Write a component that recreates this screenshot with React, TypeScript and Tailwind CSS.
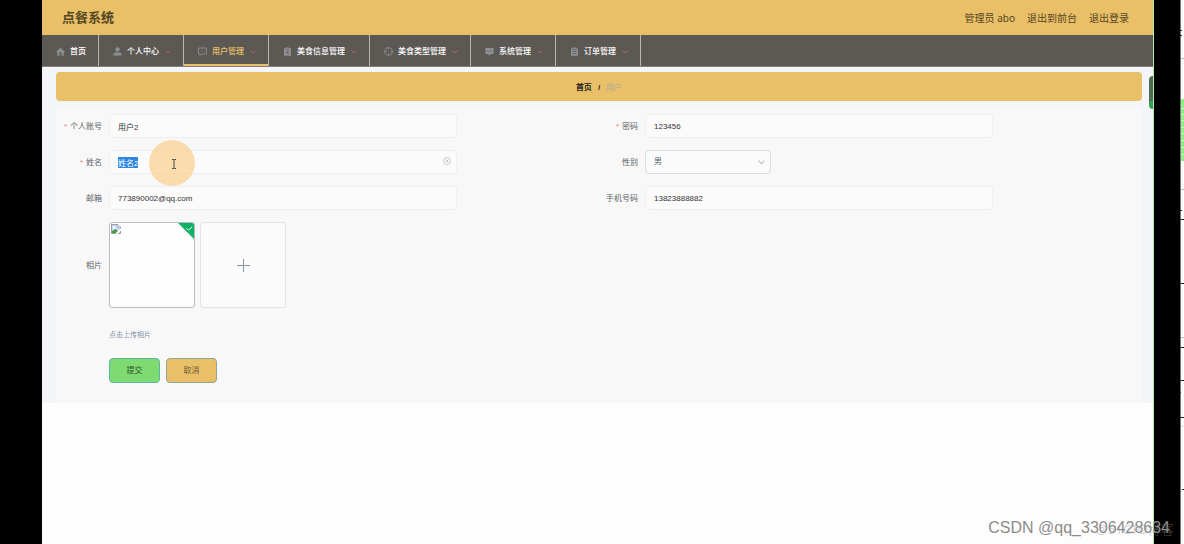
import { useEffect, useRef } from "react";
import type { ReactNode } from "react";

const iconBox = "h-[9px] w-[9px] shrink-0 text-[#8f8f93]";

function HomeIcon() {
  return (
    <svg viewBox="0 0 18 18" className={iconBox} fill="currentColor" aria-hidden="true">
      <path d="M9 1.500 1 9v2h1.500v6.500H7V12a2 2 0 0 1 4 0v5.500h4.500V11H17V9z" />
    </svg>
  );
}

function UserIcon() {
  return (
    <svg viewBox="0 0 18 18" className={iconBox} fill="currentColor" aria-hidden="true">
      <circle cx="9" cy="5" r="4.500" />
      <path d="M1 17v-2c0-2.500 2-4 4.500-4h7c2.500 0 4.500 1.500 4.500 4v2z" />
    </svg>
  );
}

function ChatIcon() {
  return (
    <svg viewBox="0 0 18 18" className={iconBox} fill="none" stroke="currentColor" strokeWidth="1.800" aria-hidden="true">
      <path d="M1 2h16v12H7l-3 3v-3H1z" />
      <path d="M5 8h1.500M8.300 8h1.500M11.600 8h1.500" strokeWidth="2" />
    </svg>
  );
}

function ClipboardXIcon() {
  return (
    <svg viewBox="0 0 18 18" className={iconBox} aria-hidden="true">
      <path d="M2 2.500h3.500V1h7v1.500H16V17.500H2z" fill="currentColor" />
      <path d="M6 4.500h6M6.500 8l5 6M11.500 8l-5 6" stroke="#5c5955" strokeWidth="1.500" />
    </svg>
  );
}

function HelpIcon() {
  return (
    <svg viewBox="0 0 18 18" className={iconBox} fill="none" stroke="currentColor" strokeWidth="1.600" aria-hidden="true">
      <circle cx="9" cy="9" r="8" />
      <path d="M9 1v5M9 12v5M1 9h5M12 9h5" />
    </svg>
  );
}

function MessageIcon() {
  return (
    <svg viewBox="0 0 18 18" className={iconBox} aria-hidden="true">
      <path d="M1 2h16v12h-5l-3 3-3-3H1z" fill="currentColor" />
      <path d="M4.500 8h2M8 8h2M11.500 8h2" stroke="#5c5955" strokeWidth="1.500" />
    </svg>
  );
}

function OrderIcon() {
  return (
    <svg viewBox="0 0 18 18" className={iconBox} aria-hidden="true">
      <path d="M2 3h3.500V1h7v2H16v14.500H2z" fill="currentColor" />
      <path d="M5.500 5.500h7M5 9h8M5 13h8" stroke="#5c5955" strokeWidth="1.500" />
    </svg>
  );
}

function Chevron({ className }: { className: string }) {
  return (
    <svg viewBox="0 0 12 8" className={className} fill="none" stroke="currentColor" strokeWidth="2" aria-hidden="true">
      <path d="m1 1 5 5 5-5" />
    </svg>
  );
}

const navItems: { label: string; icon: ReactNode; menu: boolean; active?: boolean }[] = [
  { label: "首页", icon: <HomeIcon />, menu: false },
  { label: "个人中心", icon: <UserIcon />, menu: true },
  { label: "用户管理", icon: <ChatIcon />, menu: true, active: true },
  { label: "美食信息管理", icon: <ClipboardXIcon />, menu: true },
  { label: "美食类型管理", icon: <HelpIcon />, menu: true },
  { label: "系统管理", icon: <MessageIcon />, menu: true },
  { label: "订单管理", icon: <OrderIcon />, menu: true },
];

const inputClass =
  "block h-6 w-full rounded-sm border border-[#efefef] bg-[#fbfbfb] px-2 text-[8px] leading-3 text-[#333] outline-none selection:bg-[#2d86e0] selection:text-white";

function Field({ id, label, required, children }: { id: string; label: string; required?: boolean; children: ReactNode }) {
  return (
    <div className="flex items-center">
      <label htmlFor={id} className="flex w-[46px] shrink-0 justify-end gap-[3px] pt-0.5 pr-[7px] whitespace-nowrap text-[#606266]">
        {required && <span className="text-[#e58a80]">*</span>}
        {label}
      </label>
      <div className="relative w-[65%]">{children}</div>
    </div>
  );
}

function EdgeStrip() {
  return (
    <svg viewBox="0 0 4 544" preserveAspectRatio="xMinYMin slice" className="h-full w-full" aria-hidden="true">
      <rect width="1" height="544" fill="#777" />
      <rect x="1" y="99" width="3" height="62" fill="#8fee85" />
      <path d="M1 108.500h3M1 114.500h3M1 120.500h3M1 127.500h3M1 133.500h3M1 140.500h3M1 147.500h3M1 154.500h3" stroke="#d3f8cf" />
      <path d="M1 58.500h3M1 189.500h3M1 337.500h3M2 426.500h1" stroke="#bbb" />
      <path d="M0 30.500h2M0 35.500h2M0 210.500h2M0 219.500h4M0 283.500h4M0 347.500h4M0 380.500h4M0 392.500h1M0 417.500h4M2 489.500h2" stroke="#222" />
    </svg>
  );
}

export default function App() {
  const nameRef = useRef<HTMLInputElement>(null);

  useEffect(() => {
    nameRef.current?.focus();
    nameRef.current?.select();
  }, []);

  return (
    <div className="relative flex min-h-screen flex-col bg-black font-['Liberation_Sans','Noto_Sans_CJK_SC',sans-serif] text-[8px] leading-3">
      <div className="flex flex-1">
        <div className="w-[42px] shrink-0" />

        <div className="relative flex min-w-0 flex-1 flex-col border-r border-[#b5eba8] bg-[#fdfdfd]">
          <header className="flex h-[35px] items-center justify-between bg-[#e9c067] pr-6 pl-5 text-[#544523]">
            <h1 className="text-[13px] leading-5 font-bold">点餐系统</h1>
            <div className="flex items-center gap-3 font-['Noto_Sans','Noto_Sans_CJK_SC',sans-serif] text-[10px] leading-3">
              <span>管理员 abo</span>
              <a href="#front">退出到前台</a>
              <a href="#logout">退出登录</a>
            </div>
          </header>

          <nav className="h-8 bg-[#5c5955]">
            <ul className="flex h-full border-b border-[#8b7c84]">
              {navItems.map((item) => (
                <li key={item.label} className="border-r border-[#b9b7b4]">
                  <a
                    href="#menu"
                    className={
                      item.active
                        ? "flex h-full items-center border-b-2 border-b-[#e9c067] pt-1 pr-3 pl-[14px] font-medium text-[#e9c067]"
                        : "flex h-full items-center border-b-2 border-b-transparent pt-1 pr-3 pl-[14px] font-medium text-white"
                    }
                  >
                    {item.icon}
                    <span className="pl-[5px] whitespace-nowrap">{item.label}</span>
                    {item.menu && <Chevron className="ml-1.5 h-1 w-1.5 shrink-0 text-[#b9606a]" />}
                  </a>
                </li>
              ))}
            </ul>
          </nav>

          <main className="bg-[#f4f5f9] pt-[5px] pr-[11px] pl-[14px]">
            <div className="flex h-[29px] items-center justify-center gap-1.5 rounded-sm bg-[#e9c067] pt-0.5 font-bold">
              <a href="#home" className="text-[#222]">首页</a>
              <span className="text-[#222]">/</span>
              <span className="font-normal text-[#a9a9a0]">用户</span>
            </div>

            <form className="mt-1.5 bg-[#f8f8f8] px-[7px] pt-[7px] pb-5" onSubmit={(e) => e.preventDefault()}>
              <div className="grid grid-cols-2 gap-y-3">
                <Field id="account" label="个人账号" required>
                  <input id="account" className={inputClass} defaultValue="用户2" />
                </Field>
                <Field id="password" label="密码" required>
                  <input id="password" className={inputClass} defaultValue="123456" />
                </Field>
                <Field id="name" label="姓名" required>
                  <input id="name" ref={nameRef} className={inputClass} defaultValue="姓名2" />
                  <button type="button" aria-label="清空" className="absolute top-[7px] right-1.5 h-2 w-2 text-[#b4b4b4]">
                    <svg viewBox="0 0 16 16" fill="none" stroke="currentColor" strokeWidth="1.400" aria-hidden="true">
                      <circle cx="8" cy="8" r="7" />
                      <path d="m5.500 5.500 5 5M10.500 5.500l-5 5" />
                    </svg>
                  </button>
                  <div className="pointer-events-none absolute -top-[10px] left-10 flex h-[46px] w-[46px] items-center justify-center rounded-full bg-[#fbc878]/60">
                    <svg viewBox="0 0 6 10" className="mt-px ml-[3px] h-[10px] w-1.5" fill="none" stroke="#444" aria-hidden="true">
                      <path d="M1 .5h1.500l.5.500.5-.5H5M3 1v8M1 9.500h1.500L3 9l.5.500H5" />
                    </svg>
                  </div>
                </Field>
                <Field id="gender" label="性别">
                  <div className="relative w-[126px]">
                    <select
                      id="gender"
                      defaultValue="男"
                      className="block h-6 w-full appearance-none rounded-sm border border-[#dcdddf] bg-[#fbfbfb] px-2 text-[8px] leading-3 text-[#606266] outline-none"
                    >
                      <option>男</option>
                      <option>女</option>
                    </select>
                    <Chevron className="pointer-events-none absolute top-[10px] right-1.5 h-[5px] w-[7px] text-[#c0c4cc]" />
                  </div>
                </Field>
                <Field id="email" label="邮箱">
                  <input id="email" className={inputClass} defaultValue="773890002@qq.com" />
                </Field>
                <Field id="phone" label="手机号码">
                  <input id="phone" className={inputClass} defaultValue="13823888882" />
                </Field>
              </div>

              <div className="mt-3">
                <Field id="photo" label="相片">
                  <div className="flex gap-[5px]">
                    <div className="relative h-[86px] w-[86px] overflow-hidden rounded-[3px] border border-[#b9bbc4] bg-[#fdfdfd]">
                      <svg viewBox="0 0 22 22" className="mt-px ml-px h-[10px] w-[10px]" aria-hidden="true">
                        <path d="M1 1h14l6 6v14H1z" fill="#c5d5f2" stroke="#8e949c" strokeWidth="2" />
                        <path d="M15 1v6h6" fill="#fff" stroke="#8e949c" strokeWidth="1.500" />
                        <circle cx="7" cy="8" r="3" fill="#fff" />
                        <path d="M2 20v-4l7-5 7 5-4 4z" fill="#4c9a46" />
                        <path d="M22 9 11 20v2h3l8-8z" fill="#fff" />
                      </svg>
                      <svg viewBox="0 0 17 17" className="absolute top-0 right-0 h-4 w-4" aria-hidden="true">
                        <path d="M0 0h17v17z" fill="#0eb163" />
                        <path d="m9 5.500 2.200 2.200L15 4" fill="none" stroke="#fff" />
                      </svg>
                    </div>
                    <div className="relative flex h-[86px] w-[86px] items-center justify-center rounded-[3px] border border-[#e4e5e0] bg-[#fbfbfb]">
                      <input id="photo" type="file" className="absolute inset-0 cursor-pointer opacity-0" />
                      <svg viewBox="0 0 13 13" className="h-[13px] w-[13px]" fill="none" stroke="#8c939d" aria-hidden="true">
                        <path d="M6.500 0v13M0 6.500h13" />
                      </svg>
                    </div>
                  </div>
                </Field>
              </div>

              <div className="pl-[46px]">
                <p className="mt-[21px] text-[7px] leading-3 text-[#8492a6]">点击上传相片</p>
                <div className="mt-[17px] flex gap-1.5">
                  <button type="submit" className="h-[25px] w-[51px] rounded border border-[#5db5a5] bg-[#7ddb72] text-[#2f4f2c]">
                    提交
                  </button>
                  <button type="button" className="h-[25px] w-[51px] rounded border border-[#8fa597] bg-[#e9c067] text-[#6b5a33]">
                    取消
                  </button>
                </div>
              </div>
            </form>
          </main>

          <div className="absolute top-[76px] right-0 h-[33px] w-1 rounded-l-sm border-b-8 border-[#35a050] bg-[#4d6b50]" />
        </div>

        <div className="w-[26px] shrink-0" />
        <div className="w-1 shrink-0 bg-[#fcfcfc]">
          <EdgeStrip />
        </div>
      </div>
      <div className="h-0.5 bg-[#1f1d1f]" />

      <div className="pointer-events-none absolute right-[10px] bottom-[7px] font-['Noto_Sans','Noto_Sans_CJK_SC',sans-serif] text-[13px] leading-5 text-[#8a8a8a]/40">
        @51CTO博客
      </div>
      <div className="pointer-events-none absolute right-[14px] bottom-2 font-['Liberation_Sans',sans-serif] text-[16px] leading-5 text-[#8c8c8c]">
        CSDN @qq_3306428634
      </div>
    </div>
  );
}
